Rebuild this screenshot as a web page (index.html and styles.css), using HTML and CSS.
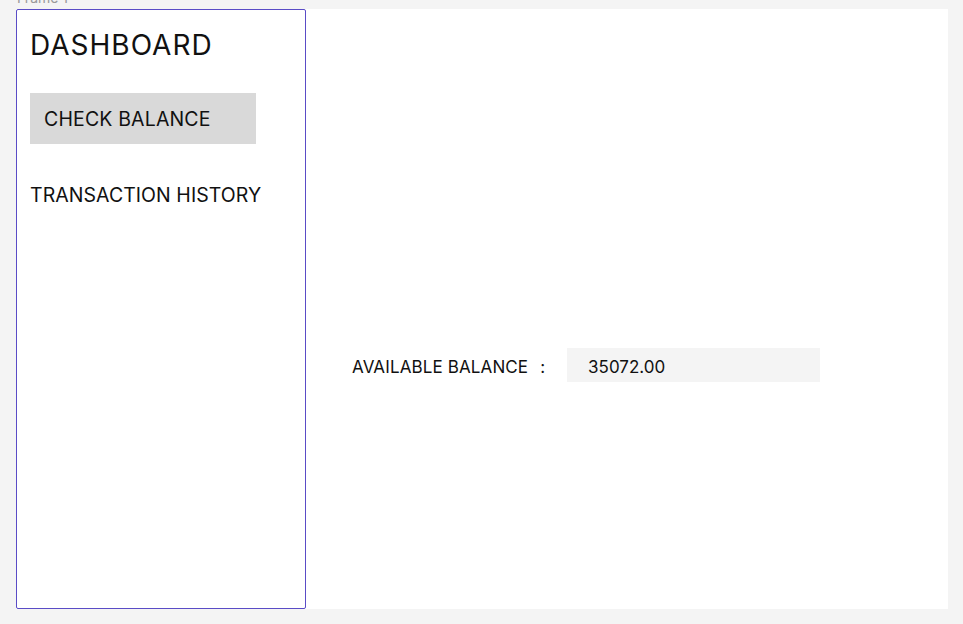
FILE: index.html
```html
<!DOCTYPE html>
<html>
<head>
<meta charset="utf-8">
<link rel="stylesheet" href="styles.css">
</head>
<body>
<div class="frame-label"><span>Frame 1</span></div>
<div class="frame">
  <aside class="sidebar">
    <h1 class="title">DASHBOARD</h1>
    <div class="nav-item active">CHECK BALANCE</div>
    <div class="nav-item">TRANSACTION HISTORY</div>
  </aside>
  <main class="main">
    <div class="balance-row">
      <span class="balance-label">AVAILABLE BALANCE</span>
      <span class="colon">:</span>
      <div class="balance-value">35072.00</div>
    </div>
  </main>
</div>
</body>
</html>
```
FILE: styles.css
```css
html, body {
  margin: 0;
  padding: 0;
  background: #f4f4f4;
  font-family: Inter, "Noto Sans", sans-serif;
  color: #111;
}
.frame-label {
  height: 9px;
  overflow: hidden;
  padding-left: 17px;
}
.frame-label span {
  display: block;
  margin-top: -9px;
  font-size: 14px;
  line-height: 14px;
  color: #9a9a9a;
}
.frame {
  margin-left: 16px;
  width: 932px;
  height: 600px;
  background: #ffffff;
  display: flex;
}
.sidebar {
  box-sizing: border-box;
  width: 290px;
  height: 600px;
  border: 1px solid #5a4cc6;
  border-radius: 2px;
  padding: 13px 0 0 13px;
  display: flex;
  flex-direction: column;
  align-items: flex-start;
}
.title {
  margin: 0;
  font-weight: 400;
  font-size: 28px;
  line-height: 44px;
  letter-spacing: 1px;
}
.nav-item {
  font-size: 19.5px;
  line-height: 24px;
  letter-spacing: 0.15px;
}
.nav-item.active {
  margin-top: 26px;
  width: 226px;
  height: 51px;
  box-sizing: border-box;
  padding: 14px 0 0 14px;
  background: #d9d9d9;
}
.nav-item:not(.active) {
  margin-top: 39px;
  letter-spacing: 0.05px;
}
.main {
  flex: 1;
  padding: 339px 0 0 46px;
}
.balance-row {
  display: flex;
  align-items: flex-start;
  height: 34px;
}
.balance-label {
  font-size: 17px;
  line-height: 38px;
  letter-spacing: 0.12px;
}
.colon {
  font-size: 17px;
  line-height: 38px;
  margin-left: 12px;
}
.balance-value {
  margin-left: 22px;
  width: 253px;
  height: 34px;
  box-sizing: border-box;
  padding-left: 21px;
  background: #f4f4f4;
  font-size: 17px;
  line-height: 38px;
  overflow: hidden;
}
```
